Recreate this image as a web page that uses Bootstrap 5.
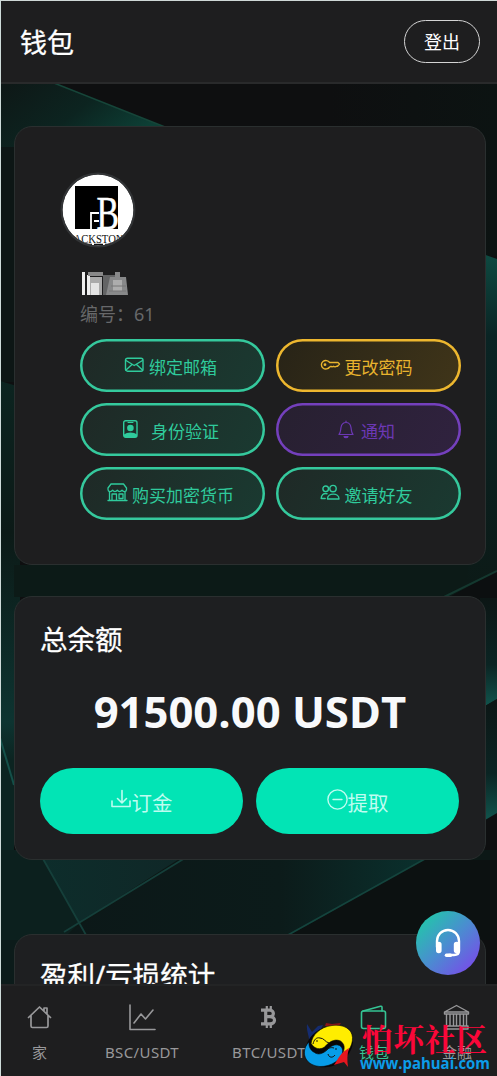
<!DOCTYPE html>
<html lang="zh-CN">
<head>
<meta charset="utf-8">
<meta name="viewport" content="width=device-width, initial-scale=1">
<title>钱包</title>
<link href="https://cdn.jsdelivr.net/npm/bootstrap@5.3.0/dist/css/bootstrap.min.css" rel="stylesheet">
<style>
  html, body { height: 1076px; overflow: hidden; }
  body { background: #0d0f0f; color: #fff; font-family: "Noto Sans", "Noto Sans CJK SC", sans-serif; line-height: 1.2; }
  svg { display: block; flex: none; }
  .stroked { fill: none; stroke: currentColor; stroke-linecap: round; stroke-linejoin: round; }
  .screen { height: 1076px; border-top: 1px solid #cfd8d6; border-left: 1px solid #cfdcda; overflow: hidden; }
  .backdrop { left: -1px; top: -1px; z-index: 0; }
  .topbar { height: 83px; background: #1e1e1f; border-bottom: 2px solid #292a2b; padding: 0 17px 0 19px; z-index: 1; }
  .topbar h1 { font-size: 27px; font-weight: 400; padding-top: 3px; -webkit-text-stroke: .3px #fff; }
  .btn-logout { width: 76px; height: 43px; border: 1px solid #d4d4d4; color: #fff; font-size: 18px; padding: 2px 0 0; }
  .content { padding: 42px 11px 0 13px; z-index: 1; }
  .panel { background: #1e1f21; border: 1px solid #2a2f2f; border-radius: 18px; }
  .panel-user { height: 439px; background: #1e1e1f; padding: 44px 24px 0 65px; margin-bottom: 31px; }
  .avatar { margin-left: -21px; }
  .uid { font-size: 18px; color: #67686a; line-height: 24px; padding-top: 6px; }
  .actions { display: grid; grid-template-columns: 185px 185px; gap: 10.5px; margin-top: 13px; }
  .btn-act { height: 53.4px; border: 0; box-shadow: inset 0 0 0 2.5px var(--c); color: var(--t); font-size: 17px; padding: 4px 4px 0 0; background: linear-gradient(120deg, var(--a), var(--b)); }
  .btn-act:hover { color: var(--t); }
  .btn-act svg { margin-top: -5px; color: var(--t); }
  .act-green { --c: #35c99d; --t: #2fcb9c; --a: #1f2926; --b: #1a3a31; }
  .act-gold { --c: #edb72f; --t: #e9b42e; --a: #272317; --b: #403519; }
  .act-violet { --c: #7440bd; --t: #6c38b5; --a: #272030; --b: #30223f; }
  .panel-balance { height: 264px; padding: 25px 25px 0; margin-bottom: 74px; }
  .panel h2 { font-size: 27.5px; font-weight: 400; line-height: 36px; -webkit-text-stroke: .3px #fff; }
  .amount { font-family: "Open Sans", sans-serif; font-size: 43.6px; font-weight: 700; color: #f8f9fb; line-height: 54px; white-space: nowrap; }
  .btn-cash { width: 203px; height: 66px; background: #02e4b5; color: #bffcf0; font-size: 20.5px; border: 0; padding: 5px 0 0; }
  .btn-cash svg { margin-top: -9px; }
  .panel-stats { height: 150px; padding: 23px 25px 0; }
  .support { width: 64px; height: 64px; left: 415px; top: 910px; z-index: 4; background: linear-gradient(135deg, #20c9a8 8%, #4a8dd0 50%, #7d45ec 95%); border: 0; padding: 0; }
  .tabbar { left: 0; right: 0; top: 983px; height: 92px; z-index: 3; background: #1e1e1f; border-top: 2px solid #232425; padding: 15px 25px 0 26px; font-size: 15px; color: #98989a; }
  .tabbar a { color: inherit; text-decoration: none; white-space: nowrap; }
  .tabbar .icon-row { height: 32px; }
  .tabbar .tab-text { padding-top: 10px; }
  .tabbar .pair { letter-spacing: .38px; }
  .tabbar .tab-on { color: #35c494; }
  .stamp { left: 299px; top: 1017px; z-index: 5; }
</style>
</head>
<body>
<div class="screen position-relative">
  <svg class="backdrop position-absolute" width="497" height="1076" viewBox="0 0 497 1076" aria-hidden="true">
    <defs>
      <linearGradient id="g1" x1="0" y1="0" x2="1" y2=".5"><stop offset="0" stop-color="#0e1716"/><stop offset=".55" stop-color="#0c2420"/><stop offset="1" stop-color="#0d4036"/></linearGradient>
      <linearGradient id="g2" x1="0" y1="0" x2="0" y2="1"><stop offset="0" stop-color="#0e4a41"/><stop offset=".25" stop-color="#0a2424"/><stop offset="1" stop-color="#0c1a17"/></linearGradient>
      <linearGradient id="g3" x1="0" y1="0" x2="0" y2="1"><stop offset="0" stop-color="#0c1615"/><stop offset=".6" stop-color="#0b2423"/><stop offset="1" stop-color="#11574f"/></linearGradient>
      <linearGradient id="g4" x1="0" y1="0" x2="0" y2="1"><stop offset="0" stop-color="#0c2420"/><stop offset=".4" stop-color="#0c1a17"/><stop offset=".9" stop-color="#0d3431"/><stop offset="1" stop-color="#0c2421"/></linearGradient>
      <linearGradient id="g5" x1="0" y1="0" x2="1" y2="0"><stop offset="0" stop-color="#0d2d2b"/><stop offset="1" stop-color="#102727"/></linearGradient>
      <linearGradient id="g6" x1="0" y1="0" x2="1" y2="0"><stop offset="0" stop-color="#0c1818"/><stop offset=".6" stop-color="#0c1b1a"/><stop offset="1" stop-color="#0a302d"/></linearGradient>
      <linearGradient id="g7" x1="0" y1="0" x2="1" y2="0"><stop offset="0" stop-color="#0e0f10"/><stop offset="1" stop-color="#0c1312"/></linearGradient>
    </defs>
    <rect width="497" height="1076" fill="#0e0f10"/>
    <path d="M330 83h167v173H330z" fill="url(#g7)"/>
    <path d="M0 83h54l111 44v20H0z" fill="url(#g1)"/>
    <path d="M54 83l111 44" stroke="#164539" stroke-width="1.500"/>
    <path d="M0 147h20v235H0z" fill="#0d1615"/>
    <path d="M0 381l20 6v373H0z" fill="url(#g4)"/>
    <path d="M14 565h483v32H14z" fill="#0c1a17"/>
    <path d="M480 253l17 6v312l-30 15z" fill="url(#g2)"/>
    <path d="M497 571v30h-55z" fill="#0c0f10"/>
    <path d="M497 571l-55 27" stroke="#14382f" stroke-width="2"/>
    <path d="M480 598h17v101l-17 10z" fill="url(#g3)"/>
    <path d="M480 709l17-10v114l-17 10z" fill="url(#g3)"/>
    <path d="M0 760h14v100H0z" fill="#0c2421"/>
    <path d="M0 738l14 47" stroke="#145049" stroke-width="2"/>
    <path d="M0 850h497v90H0z" fill="#0c1816"/>
    <path d="M38 850h155l-114 73z" fill="url(#g5)"/>
    <path d="M180 860h243l-134 75H66z" fill="url(#g6)"/>
    <path d="M0 850h38l41 73-17 17H0z" fill="#0c201e"/>
    <path d="M423 860h74v80H281z" fill="#0c1111"/>
    <path d="M38 850l48 85M190 855L64 932" stroke="#153f3a" stroke-width="1.800"/>
    <path d="M432 855L288 935" stroke="#14443d" stroke-width="1.800"/>
    <path d="M0 940h20v46H0z" fill="#0c1b1a"/>
  </svg>

  <header class="topbar position-relative d-flex align-items-center justify-content-between">
    <h1 class="m-0">钱包</h1>
    <button class="btn btn-logout rounded-pill" type="button">登出</button>
  </header>

  <main class="content position-relative">
    <section class="panel panel-user">
      <svg class="avatar" width="78" height="78" viewBox="0 0 78 78" role="img" aria-label="avatar">
        <defs><clipPath id="face"><circle cx="39" cy="39" r="35.500"/></clipPath></defs>
        <circle cx="39" cy="39" r="37.500" fill="#323436"/>
        <g clip-path="url(#face)">
          <circle cx="39" cy="39" r="35.500" fill="#fff"/>
          <path d="M16 15h43v43H16z" fill="#000"/>
          <text x="37.500" y="57.500" font-family="Liberation Serif, serif" font-size="46" textLength="22.500" lengthAdjust="spacingAndGlyphs" fill="#fff" stroke="#fff" stroke-width=".5">B</text>
          <path d="M32 58V42h8M35 50h5" fill="none" stroke="#fff" stroke-width="1.800"/>
          <text x="8" y="71.500" font-family="Liberation Serif, serif" font-size="12" textLength="63" lengthAdjust="spacingAndGlyphs" fill="#111">LACKSTONE</text>
          <path d="M24 73.500h30" stroke="#111" stroke-width="1.400" stroke-dasharray="9 2"/>
        </g>
      </svg>
      <svg width="50" height="25" viewBox="0 0 50 25" style="margin-top:22px" aria-hidden="true">
        <path d="M2 1h3v23H2zM7 4h3v20H7z" fill="#eee"/>
        <path d="M8 1h15v4H8z" fill="#888"/><path d="M10 6h12v18H10z" fill="#aaa"/><path d="M11 12h8v12h-8z" fill="#e4e4e4"/>
        <path d="M23 4h12v20H23z" fill="#636465"/><path d="M35 1h5v5h6l2 18H26l4-18h5z" fill="#88898a"/><path d="M33 9h9v11h-9z" fill="#adadad"/>
        <path d="M31 15h15M29 20h17" stroke="#777"/>
      </svg>
      <div class="uid">编号：61</div>
      <div class="actions">
        <button class="btn btn-act act-green rounded-pill d-flex align-items-center justify-content-center gap-1" type="button">
          <svg class="stroked" width="21" height="16" viewBox="0 0 21 16" stroke-width="1.400"><rect x="1.500" y="1.200" width="17.500" height="13" rx="2"/><path d="M2 3.500l8.200 5 8.300-5M2 13l6-5.500M18.500 13l-6-5.500"/></svg>
          <span>绑定邮箱</span></button>
        <button class="btn btn-act act-gold rounded-pill d-flex align-items-center justify-content-center gap-1" type="button">
          <svg class="stroked" width="21" height="14" viewBox="0 0 21 14" stroke-width="1.400"><path d="M9.700 4.500A4.500 4.200 0 1 0 9.700 9l1.300-.7 1 .5 1.500-.5 1.500.5 1.500-.5h1L19.500 6 18 4.500z"/><circle cx="5" cy="6.700" r=".7"/></svg>
          <span>更改密码</span></button>
        <button class="btn btn-act act-green rounded-pill d-flex align-items-center justify-content-center gap-1" type="button">
          <svg width="17" height="20" viewBox="0 0 17 20"><rect x="1.700" y="1.700" width="13.300" height="16.600" rx="2" class="stroked" stroke-width="1.400"/><path d="M6 3.500h5" class="stroked"/><circle cx="8.400" cy="9" r="3.300" fill="currentColor"/><path d="M2 18v-2.500c3-2.800 10-2.800 13 0V18z" fill="currentColor"/></svg>
          <span style="padding-left:8px">身份验证</span></button>
        <button class="btn btn-act act-violet rounded-pill d-flex align-items-center justify-content-center gap-1" type="button">
          <svg class="stroked" width="18" height="19" viewBox="0 0 18 19" stroke-width="1.200"><path d="M9 1v1.500M2 14.500c1.700-2 1.500-4 2-7 .5-3.200 2.600-5 5-5s4.500 1.800 5 5c.5 3 .3 5 2 7z"/><path d="M7 16.500c.5 1.600 3.500 1.600 4 0z" fill="currentColor"/></svg>
          <span style="padding:1px 0 0 2px">通知</span></button>
        <button class="btn btn-act act-green rounded-pill d-flex align-items-center justify-content-center gap-1" type="button">
          <svg class="stroked" width="21" height="19" viewBox="0 0 21 19" stroke-width="1.300"><path d="M4 1h12.500l3 4v1.500c0 2.600-3.300 2.600-4.500.7-1.200 1.900-3.500 1.900-4.700 0-1.200 1.900-3.500 1.900-4.700 0C4.500 9.100 1 9.100 1 6.500V5zM2.500 9v8.500M18 9v8.500M1 17.500h19M5 17v-6h4.500v6M12 11h4v4.500h-4z"/></svg>
          <span>购买加密货币</span></button>
        <button class="btn btn-act act-green rounded-pill d-flex align-items-center justify-content-center gap-1" type="button">
          <svg class="stroked" width="21" height="17" viewBox="0 0 21 17" stroke-width="1.400"><circle cx="13" cy="4.600" r="3.200"/><circle cx="5.700" cy="4.800" r="2.800"/><path d="M7.500 15c0-6.500 11.500-6.500 11.500 0zM7 9.700C3.500 9 1.200 11 1.200 14.500h4"/></svg>
          <span>邀请好友</span></button>
      </div>
    </section>

    <section class="panel panel-balance">
      <h2 class="m-0">总余额</h2>
      <div class="amount text-center" style="margin-top:26px">91500.00 USDT</div>
      <div class="d-flex justify-content-between" style="margin-top:30px;width:419px">
        <button class="btn btn-cash rounded-pill d-flex align-items-center justify-content-center" type="button">
          <svg class="stroked" width="21" height="20" viewBox="0 0 21 20" stroke-width="1.600"><path d="M1 12v5.500h18V12M11 1.500V14M6.500 9.500L11 14l4.500-4.500"/></svg>订金</button>
        <button class="btn btn-cash rounded-pill d-flex align-items-center justify-content-center" type="button">
          <svg class="stroked" width="21" height="21" viewBox="0 0 21 21" stroke-width="1.400"><circle cx="10.500" cy="10.500" r="9.600"/><path d="M6 10.500h9"/></svg>提取</button>
      </div>
    </section>

    <section class="panel panel-stats">
      <h2 class="m-0">盈利/亏损统计</h2>
    </section>
  </main>

  <button class="btn support position-absolute rounded-circle d-flex align-items-center justify-content-center" type="button" aria-label="客服">
    <svg width="28" height="32" viewBox="0 0 28 32" fill="none" stroke="#fff" stroke-linecap="round"><path d="M3 20v-6a11 11 0 0 1 22 0v10c0 3-2 4-5 4h-5" stroke-width="2.400"/><path d="M4.800 17.500v6M22.600 17.500v6" stroke-width="5.600"/><path d="M12.500 28.200h4" stroke-width="3.600"/></svg>
  </button>

  <nav class="tabbar position-absolute d-flex justify-content-between align-items-start">
    <a href="#" class="d-flex flex-column align-items-center"><span class="icon-row d-flex align-items-center"><svg class="stroked" width="25" height="25" viewBox="0 0 25 25" stroke-width="1.700"><path d="M1.500 12.500L12.500 2l11 10.500M4 10.500V21c0 1 .5 1.500 1.500 1.500h14c1 0 1.500-.5 1.500-1.500V10.500M17 6V3h3v6"/></svg></span><span class="tab-text">家</span></a>
    <a href="#" class="d-flex flex-column align-items-center"><span class="icon-row d-flex align-items-center"><svg class="stroked" width="27" height="27" viewBox="0 0 27 27" stroke-width="1.600"><path d="M1 1v24.500h25M5 19l7-9 4.500 5L24 6"/></svg></span><span class="tab-text pair">BSC/USDT</span></a>
    <a href="#" class="d-flex flex-column align-items-center"><span class="icon-row d-flex align-items-center"><svg class="stroked" width="16" height="22" viewBox="0 0 16 22" stroke-width="3.200" style="stroke-linecap:butt"><path d="M0 4.200h9c4.500 0 4.500 6.500 0 6.500H4.500M9 10.700c6 0 6 7.100 0 7.100H0M4.700 4v14"/><path d="M5.800 0v4M9.800 0v4M5.800 18v4M9.800 18v4" stroke-width="2.200"/></svg></span><span class="tab-text pair">BTC/USDT</span></a>
    <a href="#" class="tab-on d-flex flex-column align-items-center"><span class="icon-row d-flex align-items-center"><svg class="stroked" width="27" height="25" viewBox="0 0 27 25" stroke-width="1.600"><rect x="1.500" y="6" width="24" height="17.500" rx="2"/><path d="M3 6l17.500-4.700c1-.2 1.500.2 1.500 1.200V6"/></svg></span><span class="tab-text">钱包</span></a>
    <a href="#" class="d-flex flex-column align-items-center"><span class="icon-row d-flex align-items-center"><svg class="stroked" width="27" height="27" viewBox="0 0 27 27" stroke-width="1.400"><path d="M1.500 8L13.500 1.500 25.500 8v2h-24zM1.500 8h24M3.500 10v11M7 10v11M10.500 10v11M13.500 10v11M17 10v11M20.500 10v11M23.500 10v11M2 22h23v3H2z"/></svg></span><span class="tab-text">金融</span></a>
  </nav>

  <svg class="stamp position-absolute" width="196" height="58" viewBox="300 1018 196 58">
    <path d="M307 1024l5 8 6-6 5-1-4 8-10 10c1-6-3-12-2-19z" fill="#152c70"/>
    <path d="M325 1026l1-3 6 1 9-1-3 4z" fill="#8c1518"/>
    <path d="M306 1046c4-12 14-20 28-20 14-1 20 6 19 16-1 12-12 24-26 25-14 2-25-8-21-21z" fill="#080608"/>
    <path d="M311 1044c1-9 9-17 21-18.500 11-1.500 20 3 20.500 12 .5 9-6 17-13 20.500 5-6 7-13 1-17-7-3-12 2-16 6-4 3-10 2-13-3z" fill="#ffed00" stroke="#080808" stroke-width=".6"/>
    <path d="M309 1042c-7 7-6 18 3 22.500 10 5 23 0 28.500-7 3-4 3-10-1-12-5-2-9 1-12 4-4 4-9 6-13 3-4-2-6-6-5.500-10.500z" fill="#079ce8" stroke="#080808" stroke-width=".6"/>
    <path d="M349 1048c-2 7-2 12-1 19l-4-5-10 3c5-7 6-12 15-17z" fill="#e5171f"/>
    <path d="M313 1044c1-4 3-7 7-6 4 0 5 4 9 5M325 1051c3-3 6-4 9-3M328 1054c1 4 5 4 7 1" fill="none" stroke="#111"/>
    <circle cx="317" cy="1041" r=".8"/><circle cx="336" cy="1049" r=".8"/>
    <text x="362" y="1050.500" font-family="Noto Serif CJK SC, Noto Sans CJK SC, sans-serif" font-weight="700" font-size="30.500" textLength="125" fill="#fa0739">怕坏社区</text>
    <text x="360" y="1069" font-family="Open Sans, sans-serif" font-weight="700" font-size="15.500" textLength="130" lengthAdjust="spacingAndGlyphs" fill="#0c9ce8">www.pahuai.com</text>
  </svg>
</div>
<script src="https://cdn.jsdelivr.net/npm/bootstrap@5.3.0/dist/js/bootstrap.bundle.min.js"></script>
</body>
</html>
